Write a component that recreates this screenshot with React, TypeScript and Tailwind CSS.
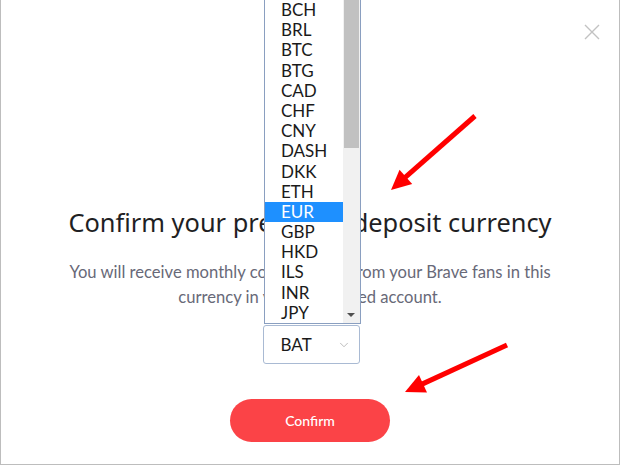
import { ChevronDown } from 'lucide-react'

const CURRENCIES = ['BCH', 'BRL', 'BTC', 'BTG', 'CAD', 'CHF', 'CNY', 'DASH', 'DKK', 'ETH', 'EUR', 'GBP', 'HKD', 'ILS', 'INR', 'JPY']

function CurrencyList() {
  return (
    <div className="absolute left-[263px] top-0 w-[97px] border-x border-b border-[#8a9fc0] bg-white">
      <div className="flex">
        <ul className="flex-1">
          {CURRENCIES.map(code => (
            <li
              key={code}
              className={`h-[20.2px] pl-[16px] text-[17px] leading-[20px] ${
                code === 'EUR' ? 'bg-[#1e90ff] text-white' : 'text-[#1a1a1a]'
              }`}
            >
              {code}
            </li>
          ))}
        </ul>
        {/* scrollbar */}
        <div className="relative w-[17px] bg-[#f1f1f1]">
          <div className="mx-[1px] h-[148px] bg-[#c1c1c1]" />
          <div className="absolute bottom-[6px] left-[4px] h-0 w-0 border-x-[4px] border-t-[4px] border-x-transparent border-t-[#505050]" />
        </div>
      </div>
    </div>
  )
}

function Arrow({ x1, y1, x2, y2 }: { x1: number; y1: number; x2: number; y2: number }) {
  const angle = Math.atan2(y2 - y1, x2 - x1)
  const len = 22
  const spread = 0.45
  const ax = x2 - len * Math.cos(angle - spread)
  const ay = y2 - len * Math.sin(angle - spread)
  const bx = x2 - len * Math.cos(angle + spread)
  const by = y2 - len * Math.sin(angle + spread)
  const sx = x2 - 14 * Math.cos(angle)
  const sy = y2 - 14 * Math.sin(angle)
  return (
    <g>
      <line x1={x1} y1={y1} x2={sx} y2={sy} stroke="#ff0000" strokeWidth={5} />
      <polygon points={`${x2},${y2} ${ax},${ay} ${bx},${by}`} fill="#ff0000" />
    </g>
  )
}

export default function App() {
  return (
    <div
      className="relative flex h-[465px] w-[620px] flex-col items-center overflow-hidden border-x border-b border-[#bdbdbd] bg-white"
      style={{ fontFamily: 'Lato, "Noto Sans", sans-serif' }}
    >
      {/* close */}
      <button type="button" className="absolute right-[19px] top-[24px] text-[#c2c2c2]">
        <svg width="16" height="16" viewBox="0 0 16 16" fill="none" stroke="currentColor" strokeWidth="1.4">
          <path d="M1 1 L15 15 M15 1 L1 15" />
        </svg>
      </button>

      <h1
        className="mt-[205px] whitespace-nowrap text-[25.4px] leading-[34px] text-[#1f1f24]"
        style={{ fontFamily: '"Noto Sans", sans-serif' }}
      >
        Confirm your preferred deposit currency
      </h1>

      <p className="mt-[21px] w-[510px] text-center text-[16.6px] leading-[25px] text-[#686978]">
        You will receive monthly contributions from your Brave fans in this currency in your connected account.
      </p>

      <div className="mt-[15px] ml-[2px] flex h-[39px] w-[97px] items-center justify-between rounded-[3px] border border-[#a9bad3] pl-[17px] pr-[8px]">
        <span className="text-[17px] text-[#1a1a1a]">BAT</span>
        <ChevronDown size={14} strokeWidth={1.2} className="text-[#a0a0a0]" />
      </div>

      <button
        type="button"
        className="mt-[35px] h-[43px] w-[160px] rounded-full bg-[#fb4347] text-[14px] font-medium text-white"
      >
        Confirm
      </button>

      <CurrencyList />

      <svg className="pointer-events-none absolute left-0 top-0" width="620" height="465">
        <Arrow x1={474} y1={116} x2={390} y2={190} />
        <Arrow x1={506} y1={345} x2={404} y2={392} />
      </svg>
    </div>
  )
}
